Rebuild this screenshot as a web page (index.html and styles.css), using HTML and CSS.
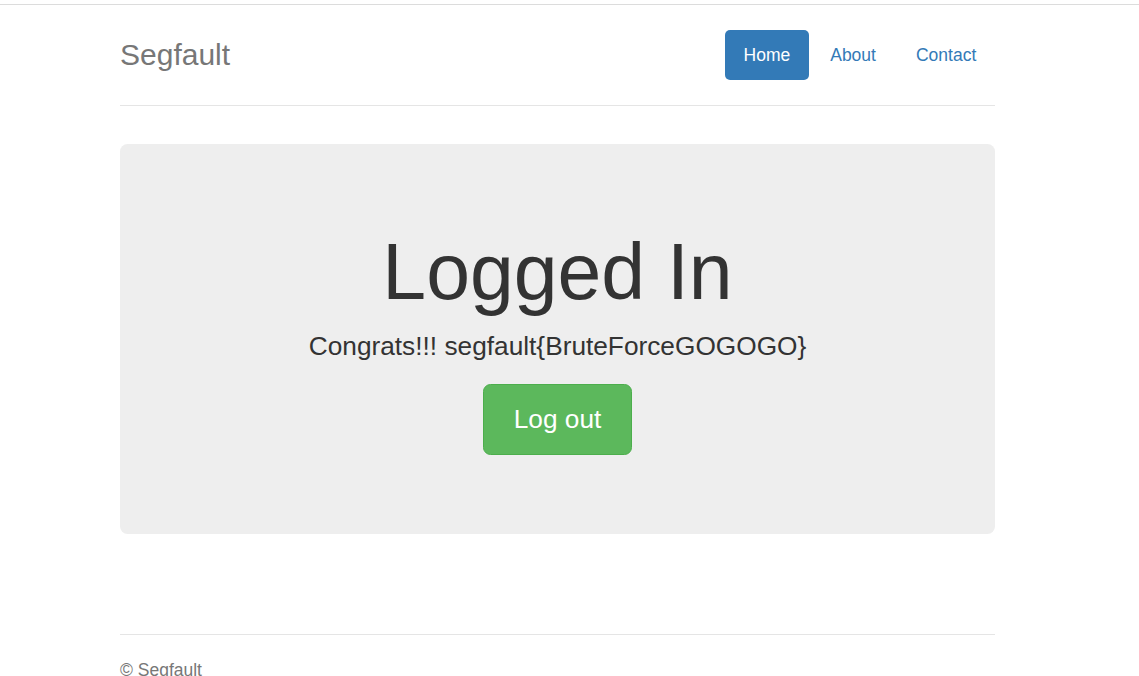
FILE: index.html
```html
<!DOCTYPE html>
<html lang="en">
<head>
<meta charset="utf-8">
<title>Segfault</title>
<link rel="stylesheet" href="styles.css">
</head>
<body>
<div class="topline"></div>
<div class="container">
  <header class="header">
    <h3 class="brand">Segfault</h3>
    <nav>
      <ul class="nav-pills">
        <li><a class="active" href="#">Home</a></li>
        <li><a href="#">About</a></li>
        <li><a href="#">Contact</a></li>
      </ul>
    </nav>
  </header>
  <main class="jumbotron">
    <h1>Logged In</h1>
    <p class="lead">Congrats!!! segfault{BruteForceGOGOGO}</p>
    <p class="actions"><a class="btn-success" href="#">Log out</a></p>
  </main>
  <footer class="footer">
    <p>&copy; Segfault</p>
  </footer>
</div>
</body>
</html>
```
FILE: styles.css
```css
html, body {
  margin: 0;
  padding: 0;
  background: #fff;
}
body {
  font-family: "Liberation Sans", Arial, Helvetica, sans-serif;
  font-size: 17.5px;
  line-height: 25px;
  color: #333;
}
.topline {
  height: 4px;
  border-bottom: 1px solid #dcdcdc;
}
.container {
  width: 875px;
  margin-left: 120px;
  padding-top: 25px;
}
.header {
  display: flex;
  justify-content: space-between;
  align-items: flex-start;
  padding-bottom: 25px;
  border-bottom: 1px solid #e5e5e5;
}
.brand {
  margin: 0;
  font-size: 30px;
  font-weight: normal;
  line-height: 50px;
  color: #777;
}
.nav-pills {
  display: flex;
  gap: 2.5px;
  list-style: none;
  margin: 0;
  padding: 0;
}
.nav-pills a {
  display: block;
  padding: 12.5px 18.75px;
  line-height: 25px;
  color: #337ab7;
  text-decoration: none;
  border-radius: 5px;
}
.nav-pills a.active {
  background: #337ab7;
  color: #fff;
}
.jumbotron {
  margin-top: 37.5px;
  padding: 60px 75px;
  background: #eee;
  border-radius: 7.5px;
  text-align: center;
}
.jumbotron h1 {
  margin: 25px 0 12.5px;
  font-size: 78.75px;
  font-weight: normal;
  line-height: 86.6px;
  color: #333;
}
.jumbotron .lead {
  margin: 0 0 18.75px;
  font-size: 26.25px;
  line-height: 37.5px;
}
.jumbotron .actions {
  display: flex;
  justify-content: center;
  margin: 0 0 18.75px;
}
.btn-success {
  display: block;
  padding: 16px 30px;
  font-size: 26.25px;
  line-height: 37px;
  color: #fff;
  background: #5cb85c;
  border: 1px solid #4cae4c;
  border-radius: 7.5px;
  text-decoration: none;
}
.footer {
  margin-top: 100px;
  padding-top: 23.75px;
  border-top: 1px solid #e5e5e5;
  color: #777;
}
.footer p {
  margin: 0 0 12.5px;
}
```
